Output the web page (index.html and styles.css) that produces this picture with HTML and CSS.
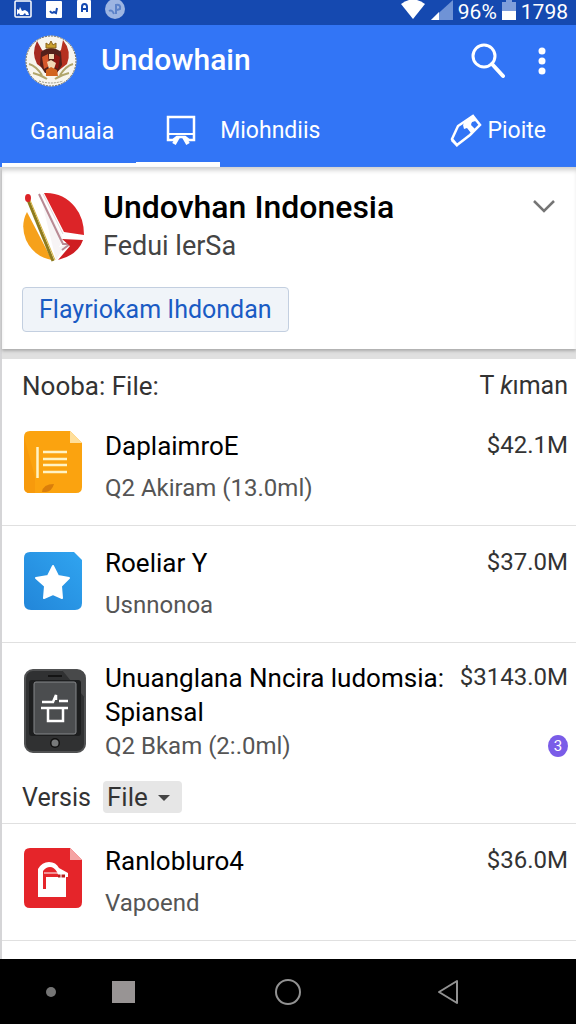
FILE: index.html
```html
<!DOCTYPE html>
<html lang="id">
<head>
    <meta charset="UTF-8">
    <meta name="viewport" content="width=device-width, initial-scale=1.0">
    <title>Undowhain</title>
    <link rel="stylesheet" href="styles.css">
</head>
<body>
    <div class="status-bar">
        <div class="status-left">
            <svg width="18" height="18" viewBox="0 0 18 18">
                <rect x="1" y="1" width="16" height="16" rx="1" fill="#1549b0" stroke="#fff" stroke-width="1.5"/>
                <path d="M3 15V9l2 1 1-3 2 4 3-1 3 2 1 3h-3l-1-2-2 2H6l-1-2z" fill="#fff"/>
            </svg>
            <svg width="18" height="18" viewBox="0 0 18 18">
                <rect x="1" y="1" width="16" height="17" rx="1" fill="#fff"/>
                <path d="M5 11q2 3 4 1l2 1 1-5" fill="none" stroke="#1549b0" stroke-width="2"/>
            </svg>
            <svg width="16" height="18" viewBox="0 0 16 18">
                <rect x="1" y="0" width="14" height="18" rx="1" fill="#fff"/>
                <path d="M6 12V7q0-3 2.500-3T11 7v5M6 9h5" fill="none" stroke="#1549b0" stroke-width="2"/>
            </svg>
            <svg width="20" height="20" viewBox="0 0 20 20">
                <circle cx="10" cy="9" r="10" fill="#9db5e2"/>
                <path d="M4 11q3-2 5 3M11 14V5q5-1 4 4l-3 1" fill="none" stroke="#5c82c8" stroke-width="2"/>
            </svg>
        </div>
        <div class="status-right">
            <svg width="26" height="20" viewBox="0 0 26 20">
                <path d="M1 4Q13-5 25 4L13 19z" fill="#fff"/>
            </svg>
            <svg width="24" height="20" viewBox="0 0 24 20">
                <path d="M1 20L23 0v20z" fill="#6f93d6"/>
                <path d="M1 20l8-8v8z" fill="#fff"/>
            </svg>
            <span class="battery-text">96%</span>
            <svg width="16" height="20" viewBox="0 0 16 20">
                <path d="M1 2h4V0h6v2h4v9H1z" fill="#7f9edb"/>
                <path d="M1 11h14v9H1z" fill="#fff"/>
            </svg>
            <span class="clock">1798</span>
        </div>
    </div>

    <header class="header">
        <div class="toolbar">
            <svg class="emblem" width="52" height="52" viewBox="0 0 52 52">
                <circle cx="26" cy="26" r="25.500" fill="#f8f5ee"/>
                <circle cx="26" cy="26" r="25" fill="none" stroke="#6d6a5c" stroke-width="1" stroke-dasharray="2 1"/>
                <path d="M12 6Q6 18 12 29l8 6 3-15-6-5z" fill="#a62a20"/>
                <path d="M38 5q9 11 4 24l-9 7-4-16 7-5z" fill="#b5301f"/>
                <path d="M16 17q10-8 20 0l1 13-5 8H20l-5-8z" fill="#54201a"/>
                <path d="M17 22l6-3 1 12-5 3z" fill="#d5572b"/>
                <path d="M35 22l-5-3-2 12 5 3z" fill="#8c1712"/>
                <path d="M24 19h5v5h-5zM22 27l4-2 5 3-2 6h-5z" fill="#f1d9b6"/>
                <path d="M21 35l5-3 6 3 1 6H21z" fill="#d2641f"/>
                <path d="M21 13V8l3 2 2-4 2 4 3-2v5z" fill="#caa02c" stroke="#8b641c" stroke-width="1"/>
                <path d="M4 29q7 2 13 11M48 29q-7 2-13 11M8 38q8 2 14 6M44 38q-8 2-14 6" fill="none" stroke="#b1a56b" stroke-width="2"/>
                <path d="M14 46q12 4 24 0" fill="none" stroke="#9b9a86" stroke-width="1" stroke-dasharray="2 1"/>
            </svg>
            <h1 class="app-title">Undowhain</h1>
            <button class="icon-button" aria-label="Cari">
                <svg width="34" height="36" viewBox="0 0 34 36">
                    <circle cx="13" cy="13" r="11" fill="none" stroke="#fff" stroke-width="3"/>
                    <path d="M21 21l11 12" stroke="#fff" stroke-width="4" stroke-linecap="round"/>
                </svg>
            </button>
            <button class="icon-button more" aria-label="Menu">
                <svg width="8" height="28" viewBox="0 0 8 28">
                    <circle cx="4" cy="4" r="3.500" fill="#fff"/>
                    <circle cx="4" cy="14" r="3.500" fill="#fff"/>
                    <circle cx="4" cy="24" r="3.500" fill="#fff"/>
                </svg>
            </button>
        </div>
        <nav class="tabs">
            <a class="tab tab-first" href="#ganuaia">Ganuaia</a>
            <a class="tab tab-icon" href="#papan" aria-label="Papan">
                <svg width="30" height="32" viewBox="0 0 30 32">
                    <path d="M2 2h26v23h-5l-4-3h-8l-4 3H2z" fill="none" stroke="#fff" stroke-width="2.500"/>
                    <path d="M3 19h24" stroke="#fff" stroke-width="2"/>
                    <path d="M12 22l-4 7M18 22l4 7" stroke="#fff" stroke-width="4"/>
                </svg>
            </a>
            <a class="tab tab-middle" href="#miohndiis">Miohndiis</a>
            <a class="tab tab-last" href="#pioite">
                <svg width="32" height="34" viewBox="0 0 32 34">
                    <path d="M23 2l7 9-10 10-13 10-5-6 6-13z" fill="none" stroke="#fff" stroke-width="2.500"/>
                    <path d="M2 25l6 6-1 2-6-6z" fill="#fff"/>
                    <path d="M15 7l8-6 4 6-5 1-1 3 4 4-4 4-4-5-3 1-1-4z" fill="#fff"/>
                    <path d="M22 10l3-2" stroke="#3275f6" stroke-width="2"/>
                </svg>
                Pioite
            </a>
        </nav>
    </header>

    <main class="content">
        <section class="card profile">
            <div class="profile-top">
                <svg class="profile-logo" width="62" height="70" viewBox="0 0 62 70">
                    <path d="M4 20Q-3 33 3 48q8 17 26 20z" fill="#f6a11b"/>
                    <path d="M21 1q19-1 31 14 9 11 9 28l-20-3z" fill="#dc2428"/>
                    <path d="M17 2L38 42l2 6-4 7 10-3-6 5-7 11" fill="#f7f4f5"/>
                    <path d="M16 2l21 44 3 6h7l-8 6" fill="none" stroke="#b98a94" stroke-width="2"/>
                    <path d="M20 2l20 40" stroke="#e3d5d8" stroke-width="1"/>
                    <path d="M39 47l21 1q-5 15-25 20l12-14z" fill="#cf1d22"/>
                    <path d="M5 8l25 61" stroke="#8e7b1d" stroke-width="3"/>
                    <path d="M7 8l25 60" stroke="#d7b23f" stroke-width="1"/>
                    <ellipse cx="5" cy="6" rx="3" ry="4" fill="#dc2428"/>
                </svg>
                <div class="profile-text">
                    <h2 class="profile-name">Undovhan Indonesia</h2>
                    <p class="profile-sub">Fedui lerSa</p>
                </div>
                <button class="icon-button expand" aria-label="Buka">
                    <svg width="24" height="16" viewBox="0 0 24 16">
                        <path d="M2 2l10 10L22 2" fill="none" stroke="#757575" stroke-width="2.500"/>
                    </svg>
                </button>
            </div>
            <button class="chip">Flayriokam Ihdondan</button>
        </section>

        <section class="card list">
            <div class="list-head">
                <h3 class="list-title">Nooba: File:</h3>
                <span class="list-sort">T <i>k</i>ıman</span>
            </div>

            <div class="row">
                <svg class="row-icon" width="58" height="62" viewBox="0 0 58 62">
                    <path d="M6 0h40l12 12v44q0 6-6 6H6q-6 0-6-6V6q0-6 6-6z" fill="#fba30f"/>
                    <path d="M46 0l12 12H46z" fill="#ffdf9a"/>
                    <path d="M11 46v16H6q-6 0-6-6V6z" fill="#f79a0c"/>
                    <path d="M18 61q1-8 12-8-2 7-8 8z" fill="#d97e0b"/>
                    <path d="M13.500 16v31M19 21h24M19 28h24M19 34h24M19 41h24" stroke="#fff3c4" stroke-width="2.500"/>
                </svg>
                <div class="row-text">
                    <p class="row-title">DaplaimroE</p>
                    <p class="row-sub">Q2 Akiram (13.0ml)</p>
                </div>
                <span class="amount">$42.1M</span>
            </div>

            <div class="row">
                <svg class="row-icon" width="58" height="62" viewBox="0 -4 58 62">
                    <defs>
                        <linearGradient id="blue" x1="0" y1="1" x2="1" y2="0">
                            <stop offset="0" stop-color="#2286d9"/>
                            <stop offset="1" stop-color="#30a4f0"/>
                        </linearGradient>
                    </defs>
                    <path d="M6 0h44l8 8v43q0 7-7 7H7q-7 0-7-7V6q0-6 6-6z" fill="url(#blue)"/>
                    <path d="M29 14l5 10 11 2-8 8 1 12-9-4-9 4 1-12-9-8 12-2z" fill="#fff" stroke="#fff" stroke-width="2" stroke-linejoin="round"/>
                </svg>
                <div class="row-text">
                    <p class="row-title">Roeliar Y</p>
                    <p class="row-sub">Usnnonoa</p>
                </div>
                <span class="amount">$37.0M</span>
            </div>

            <div class="row row-tall">
                <svg class="row-icon" width="62" height="84" viewBox="0 0 62 84">
                    <rect x="0" y="32" width="4" height="16" fill="#222"/>
                    <rect x="1" y="1" width="60" height="82" rx="8" fill="#303132" stroke="#505152" stroke-width="2"/>
                    <path d="M38 1h15q8 0 8 8v20z" fill="#48494a"/>
                    <rect x="5" y="11" width="52" height="56" rx="3" fill="#1d1e1f"/>
                    <rect x="10" y="13" width="42" height="52" rx="2" fill="#4b4d4f" stroke="#85878a" stroke-width="1"/>
                    <path d="M24 7h14" stroke="#141414" stroke-width="2"/>
                    <path d="M18 33h11l3-7v5M35 32h9M17 39h27M24 40v12h15V40" fill="none" stroke="#fff" stroke-width="2.500"/>
                    <circle cx="31" cy="74" r="5" fill="#111"/>
                    <circle cx="31" cy="74" r="3.500" fill="#77797a"/>
                </svg>
                <div class="row-text">
                    <p class="row-title">Unuanglana Nncira ludomsia: Spiansal</p>
                    <p class="row-sub">Q2 Bkam (2:.0ml)</p>
                </div>
                <div class="row-side">
                    <span class="amount">$3143.0M</span>
                    <span class="badge">3</span>
                </div>
            </div>

            <div class="filter">
                <label for="file-type">Versis</label>
                <div class="select-box">
                    <select id="file-type">
                        <option>File</option>
                    </select>
                    <svg class="caret" width="12" height="8" viewBox="0 0 12 8">
                        <path d="M0 1h12L6 7z" fill="#444"/>
                    </svg>
                </div>
            </div>

            <div class="row">
                <svg class="row-icon" width="58" height="62" viewBox="0 -2 58 62">
                    <path d="M6 0h40l12 12v42q0 6-6 6H6q-6 0-6-6V6q0-6 6-6z" fill="#e5252a"/>
                    <path d="M46 0l12 12H46z" fill="#f5a3a3"/>
                    <path d="M14 49V21q4-7 11-7t10 6l9 5v4h-2v20z" fill="#fff"/>
                    <path d="M19 41V23q3-4 7-4t7 5l2 5H22v12z" fill="#e5252a"/>
                    <path d="M20 25h14" stroke="#fff" stroke-width="1"/>
                    <path d="M34 28h7" stroke="#b71c1c" stroke-width="3"/>
                    <path d="M37 26v5" stroke="#fff" stroke-width="1"/>
                </svg>
                <div class="row-text">
                    <p class="row-title">Ranlobluro4</p>
                    <p class="row-sub">Vapoend</p>
                </div>
                <span class="amount">$36.0M</span>
            </div>
        </section>
    </main>

    <footer class="nav-bar">
        <span class="nav-dot"></span>
        <button class="icon-button" aria-label="Terbaru"><span class="nav-square"></span></button>
        <button class="icon-button nav-home" aria-label="Beranda"><span class="nav-circle"></span></button>
        <button class="icon-button nav-back" aria-label="Kembali">
            <svg width="22" height="26" viewBox="0 0 22 26">
                <path d="M20 2v22L2 13z" fill="none" stroke="#929292" stroke-width="2" stroke-linejoin="round"/>
            </svg>
        </button>
    </footer>
</body>
</html>
```
FILE: styles.css
```css
* {
    box-sizing: border-box;
}

body {
    font-family: Roboto, Arial, sans-serif;
    display: flex;
    flex-direction: column;
    min-height: 100vh;
    margin: 0;
    background-color: #fff;
    color: #333;
}

h1, h2, h3, p {
    margin: 0;
    font-weight: 400;
}

svg {
    display: block;
    flex-shrink: 0;
}

button {
    font-family: inherit;
    cursor: pointer;
}

.icon-button {
    padding: 0;
    border: none;
    background: none;
}

.status-bar {
    display: flex;
    justify-content: space-between;
    height: 25px;
    padding: 0 8px 0 14px;
    background-color: #1549b0;
    color: #fff;
}

.status-left {
    display: flex;
    gap: 13px;
}

.status-right {
    display: flex;
    gap: 4px;
    font-size: 21px;
    line-height: 24px;
}

.header {
    background-color: #3275f6;
    color: #fff;
}

.toolbar {
    display: flex;
    align-items: center;
    height: 70px;
    padding: 2px 30px 0 25px;
}

.app-title {
    flex: 1;
    margin-left: 24px;
    padding-bottom: 4px;
    font-size: 30px;
    font-weight: 500;
}

.more {
    margin-left: 33px;
}

.tabs {
    display: flex;
    height: 72px;
    padding-left: 2px;
    font-size: 23px;
}

.tab {
    display: flex;
    align-items: center;
    color: #fff;
    text-decoration: none;
}

.tab-first {
    padding: 4px 22px 0 28px;
    border-bottom: 4px solid #fff;
}

.tab-icon {
    padding: 4px 24px 0 30px;
    border-bottom: 5px solid #fff;
}

.tab-middle {
    padding-bottom: 1px;
}

.tab-last {
    gap: 5px;
    margin-left: auto;
    padding: 0 30px 1px 0;
}

.content {
    display: flex;
    flex: 1;
    flex-direction: column;
    gap: 10px;
    border-left: 2px solid #d5d5d7;
    background-color: #e0e0e0;
}

.card {
    background-color: #fff;
}

.profile {
    padding: 20px 20px 17px;
    box-shadow: inset 0 5px 5px -2px #ccc, 0 2px 3px #aaa;
}

.profile-top {
    display: flex;
    align-items: flex-start;
}

.profile-logo {
    margin: 5px 18px 0 1px;
}

.profile-text {
    flex: 1;
}

.profile-name {
    color: #000;
    font-size: 32px;
    font-weight: 500;
    line-height: 40px;
}

.profile-sub {
    color: #444;
    font-size: 27px;
    line-height: 38px;
}

.expand {
    margin-top: 12px;
}

.chip {
    display: block;
    height: 45px;
    margin-top: 22px;
    padding: 0 16px;
    border: 1px solid #c3cfe0;
    border-radius: 4px;
    background-color: #f0f4f9;
    color: #1a5bc4;
    font-size: 25px;
}

.list {
    flex: 1;
}

.list-head {
    display: flex;
    justify-content: space-between;
    padding: 8px 8px 4px 20px;
    line-height: 38px;
}

.list-title {
    font-size: 26px;
}

.list-sort {
    font-size: 25px;
}

.row {
    display: flex;
    align-items: flex-start;
    padding: 20px 8px 20px 22px;
    border-bottom: 1px solid #e0e0e0;
}

.row-icon {
    margin-top: 2px;
}

.row-text {
    flex: 1;
    padding-left: 23px;
}

.row-title {
    color: #000;
    font-size: 26px;
    line-height: 34px;
}

.row-sub {
    padding-top: 8px;
    color: #555;
    font-size: 24px;
    line-height: 34px;
}

.amount {
    color: #333;
    font-size: 24px;
    line-height: 32px;
}

.row-tall {
    padding-top: 18px;
    padding-bottom: 0;
    border-bottom: none;
}

.row-tall .row-icon {
    margin-top: 8px;
}

.row-tall .row-text {
    padding-left: 19px;
}

.row-tall .row-sub {
    padding-top: 0;
}

.row-side {
    display: flex;
    flex-direction: column;
    align-items: flex-end;
    gap: 42px;
}

.badge {
    width: 20px;
    height: 22px;
    border-radius: 50%;
    background-color: #7a5ce8;
    color: #fff;
    font-size: 15px;
    line-height: 22px;
    text-align: center;
}

.filter {
    display: flex;
    align-items: center;
    gap: 12px;
    padding: 18px 20px 10px;
    border-bottom: 1px solid #e0e0e0;
    font-size: 25px;
}

.select-box {
    position: relative;
}

.select-box select {
    appearance: none;
    display: block;
    height: 32px;
    padding: 0 34px 0 4px;
    border: none;
    border-radius: 4px;
    background-color: #e6e6e6;
    color: #333;
    font-family: inherit;
    font-size: 26px;
}

.caret {
    position: absolute;
    top: 13px;
    right: 12px;
    pointer-events: none;
}

.nav-bar {
    display: flex;
    align-items: center;
    height: 65px;
    padding-left: 46px;
    background-color: #000;
}

.nav-dot {
    width: 10px;
    height: 10px;
    margin-right: 56px;
    border-radius: 50%;
    background-color: #757575;
}

.nav-square {
    display: block;
    width: 23px;
    height: 22px;
    background-color: #989494;
}

.nav-circle {
    display: block;
    width: 26px;
    height: 26px;
    border: 2px solid #929292;
    border-radius: 50%;
}

.nav-home {
    margin-left: 140px;
}

.nav-back {
    margin-left: 136px;
}
```
